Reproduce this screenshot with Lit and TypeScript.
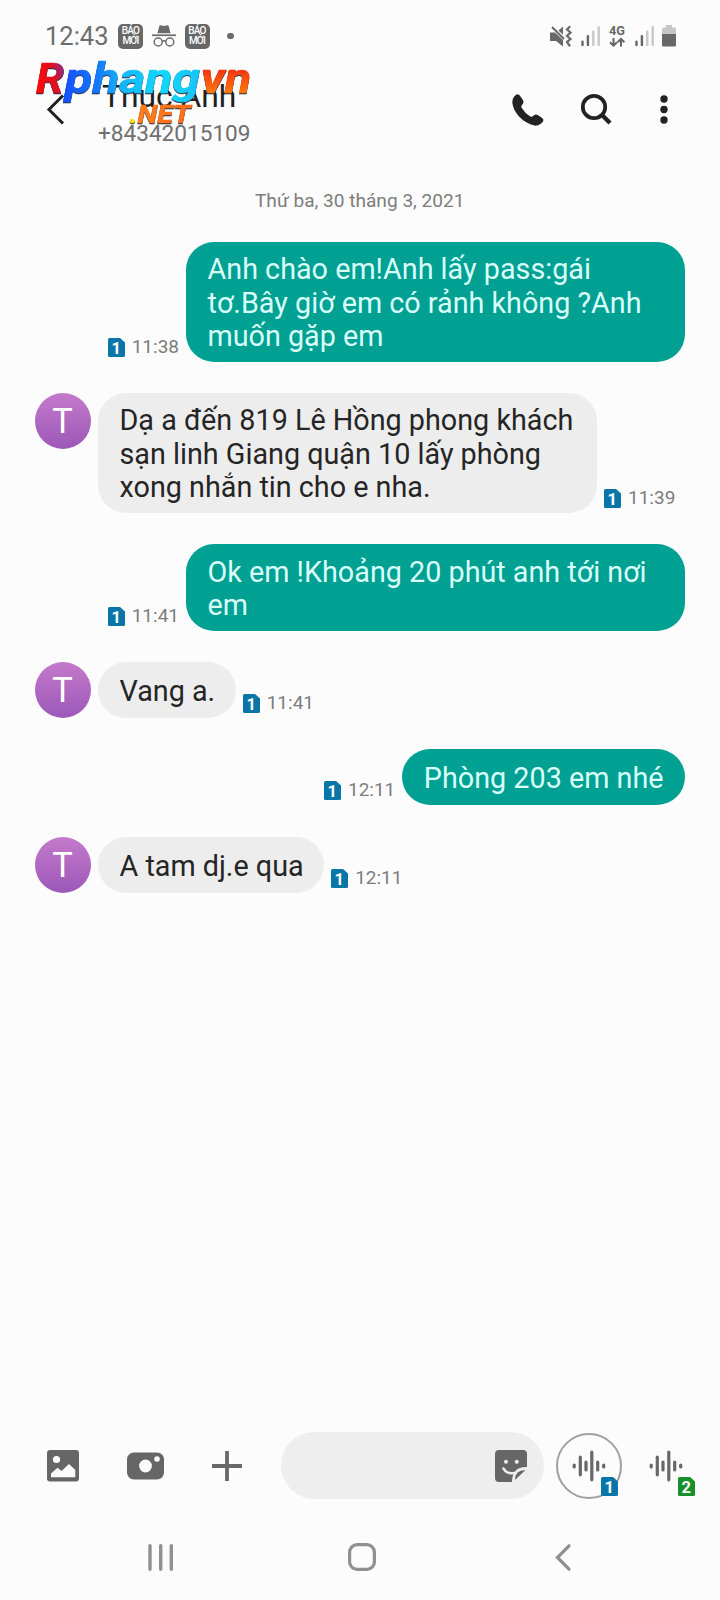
import { LitElement, html, css, svg } from "lit";
import { customElement, property } from "lit/decorators.js";

interface Message {
  mine: boolean;
  time: string;
  lines: string[];
  wide?: boolean;
}

const MESSAGES: Message[] = [
  { mine: true, time: "11:38", wide: true, lines: ["Anh chào em!Anh lấy pass:gái", "tơ.Bây giờ em có rảnh không ?Anh", "muốn gặp em"] },
  { mine: false, time: "11:39", wide: true, lines: ["Dạ a đến 819 Lê Hồng phong khách", "sạn linh Giang quận 10 lấy phòng", "xong nhắn tin cho e nha."] },
  { mine: true, time: "11:41", wide: true, lines: ["Ok em !Khoảng 20 phút anh tới nơi", "em"] },
  { mine: false, time: "11:41", lines: ["Vang a."] },
  { mine: true, time: "12:11", lines: ["Phòng 203 em nhé"] },
  { mine: false, time: "12:11", lines: ["A tam dj.e qua"] },
];

@customElement("sim-badge")
class SimBadge extends LitElement {
  @property() num = "1";
  static styles = css`
    :host { display: block; width: 17px; height: 19px; flex: none; }
    svg { display: block; }
    .blue { fill: #0a76a8; }
    .green { fill: #17902c; }
    text { font: 700 16.5px Roboto, sans-serif; fill: #fff; text-anchor: middle; }
  `;
  render() {
    return html`<svg width="17" height="19" viewBox="0 0 17 19">
      <path class=${this.num === "1" ? "blue" : "green"} d="M1.5 0H12L17 4.5V17.5Q17 19 15.5 19H1.5Q0 19 0 17.5V1.5Q0 0 1.5 0Z" />
      <text x="8.2" y="15.6">${this.num}</text>
    </svg>`;
  }
}

@customElement("message-row")
class MessageRow extends LitElement {
  @property({ attribute: false }) message!: Message;
  static styles = css`
    :host { display: block; }
    .row { display: flex; align-items: flex-end; }
    .mine { flex-direction: row-reverse; }
    .avatar {
      align-self: flex-start; width: 56px; height: 56px; margin-right: 7.5px; border-radius: 50%; flex: none;
      background: linear-gradient(#c47acb, #9c58b8);
      color: #fff; font-size: 34.5px; line-height: 56px; text-align: center;
    }
    .bubble {
      box-sizing: border-box; min-height: 56px; padding: 11.6px 20.5px 8.2px 21.5px; border-radius: 28px;
      display: flex; flex-direction: column; justify-content: center;
      background: #ededed; color: #252525; font-size: 28.75px; line-height: 33.4px; white-space: nowrap;
    }
    .mine .bubble { background: #00a092; color: #d9fffb; padding-right: 21.5px; }
    .wide { width: 499px; }
    .meta { display: flex; align-items: flex-end; gap: 7px; margin: 0 7px 5px; }
    .time { font-size: 19px; line-height: 20px; color: #7c7c7c; }
  `;
  render() {
    const m = this.message;
    return html`<div class="row ${m.mine ? "mine" : ""}">
      ${m.mine ? "" : html`<div class="avatar">T</div>`}
      <div class="bubble ${m.wide ? "wide" : ""}">${m.lines.map((l) => html`<div>${l}</div>`)}</div>
      <div class="meta"><sim-badge></sim-badge><span class="time">${m.time}</span></div>
    </div>`;
  }
}

const wave = svg`<path d="M4.2 17v2M10.3 9.2v17.6M16 14v8M21.8 4.2v27.6M27.7 14v8M33.7 17v2"
  fill="none" stroke="#686868" stroke-width="3.2" stroke-linecap="round" />`;

const signal = html`<svg class="signal" width="20" height="20" viewBox="0 0 20 20">
  <path d="M1.5 15.7v3.2M6.9 10.2v8.7" stroke="#666" stroke-width="2.4" stroke-linecap="round" />
  <path d="M12.3 5.6v13.3M17.7 1.2v17.7" stroke="#c8c8c8" stroke-width="2.4" stroke-linecap="round" />
</svg>`;

const news = html`<div class="news"><span>BÁO</span><span>MỚI</span></div>`;

@customElement("app-root")
class AppRoot extends LitElement {
  static styles = css`
    :host {
      display: flex; flex-direction: column; position: relative; width: 720px; height: 1600px;
      background: #fcfcfc; font-family: Roboto, "Noto Sans", sans-serif; overflow: hidden;
    }
    svg { display: block; flex: none; overflow: visible; }
    .status { display: flex; align-items: center; height: 72px; padding: 0 44px 0 45px; box-sizing: border-box; flex: none; color: #6d6d6d; }
    .clock { font-size: 25.5px; line-height: 30px; width: 73px; }
    .news {
      width: 25px; height: 25px; border-radius: 5px; background: #676767; color: #fff; flex: none;
      display: flex; flex-direction: column; align-items: center; justify-content: center;
      font-size: 10px; line-height: 10px; font-weight: 500; letter-spacing: -0.8px;
    }
    .incognito { margin: 0 9px 0 8.5px; }
    .dot { width: 6.6px; height: 6.6px; border-radius: 50%; background: #6b6b6b; margin-left: 17.5px; }
    .mute { margin-left: auto; }
    .signal { margin-left: 9px; }
    .net { margin: 0 0 0 8px; }
    .net text { font: 700 13.5px Roboto, sans-serif; fill: #666; }
    .battery { margin-left: 7.5px; }

    .header { display: flex; height: 90px; padding: 0 52px 0 47px; box-sizing: border-box; flex: none; }
    .back { margin-top: 21.5px; }
    .who { margin: 7px 0 0 34px; flex: 1; }
    .name { font-size: 31.8px; line-height: 35px; color: #202020; padding-left: 3px; }
    .phone { font-size: 22.6px; line-height: 28px; color: #6f6f6f; margin: 6px 0 0 -1px; }
    .call { margin-top: 21.5px; }
    .search { margin: 22px 0 0 36.5px; }
    .more { margin: 22px 0 0 49.5px; }
    .brand { position: absolute; left: 30px; top: 55px; filter: drop-shadow(.8px 1.3px 0 #243048); }
    .brand text { font: italic 700 42px Roboto, sans-serif; }
    .brand .net-text { font-size: 26px; }

    .thread { flex: 1; padding: 24.5px 35px 0 34.5px; display: flex; flex-direction: column; }
    .date { text-align: center; font-size: 19.1px; line-height: 27px; color: #7c7c7c; margin-bottom: 28px; }
    .list { display: flex; flex-direction: column; gap: 31.3px; }

    .composer { display: flex; align-items: center; height: 67px; padding-left: 47px; flex: none; }
    .camera { margin-left: 48px; }
    .plus { margin-left: 48px; }
    .field {
      width: 263px; height: 67px; box-sizing: border-box; margin-left: 39px; border-radius: 34px; background: #eee;
      display: flex; align-items: center; justify-content: flex-end; padding-right: 17px;
    }
    .voice { position: relative; width: 66px; height: 66px; box-sizing: border-box; border-radius: 50%; margin-left: 11px; display: flex; align-items: center; justify-content: center; flex: none; }
    .ringed { border: 2px solid #a0a0a0; margin-left: 11.5px; }
    .voice sim-badge { position: absolute; right: 4px; bottom: 3px; }
    .ringed sim-badge { right: 1.5px; bottom: 1px; }
    .nav { display: flex; align-items: center; height: 101px; box-sizing: border-box; padding: 15px 0 0 148px; flex: none; }
    .home { margin-left: 174px; }
    .prev { margin-left: 179px; }
  `;

  render() {
    return html`
      <div class="status">
        <div class="clock">12:43</div>
        ${news}
        <svg class="incognito" width="24" height="22" viewBox="0 0 24 22" fill="#6b6b6b">
          <path d="M5.4 8.2L7.2 1.4Q7.6 0 9 .3L12 1L15 .3Q16.4 0 16.8 1.4L18.6 8.2Z" />
          <rect x="0" y="9.4" width="24" height="1.7" />
          <g fill="none" stroke="#6b6b6b" stroke-width="1.5"><circle cx="6.2" cy="17" r="4" /><circle cx="17.8" cy="17" r="4" /><path d="M10.2 16.4Q12 15 13.8 16.4" /></g>
        </svg>
        ${news}
        <div class="dot"></div>
        <svg class="mute" width="22" height="21" viewBox="0 0 22 21">
          <path d="M0 6.5H5L13 14V20.5L6 15H0ZM8.5 4.5L13 .5V8.8Z" fill="#686868" />
          <path d="M2 1L14 13" stroke="#686868" stroke-width="2" />
          <path d="M19.5 1L17 3.5L20.5 6.5L17 10L20.5 13L17 16L19.5 19.5" fill="none" stroke="#686868" stroke-width="2.2" stroke-linecap="round" />
        </svg>
        ${signal}
        <svg class="net" width="17" height="22" viewBox="0 0 17 22">
          <text x="0" y="10" textLength="16" lengthAdjust="spacingAndGlyphs">4G</text>
          <path d="M4.5 13V20M1 17.2L4.5 20.6L8 17.2M12 21.5V14M8.6 17.2L12 13.8L15.4 17.2" fill="none" stroke="#666" stroke-width="2" />
        </svg>
        ${signal}
        <svg class="battery" width="14" height="22" viewBox="0 0 14 22">
          <path d="M4 0H10V2.5H12.5Q14 2.5 14 4V9H0V4Q0 2.5 1.5 2.5H4Z" fill="#c6c6c6" />
          <path d="M0 9H14V20Q14 21.5 12.5 21.5H1.5Q0 21.5 0 20Z" fill="#686868" />
        </svg>
      </div>

      <div class="header">
        <svg class="back" width="18" height="31" viewBox="0 0 18 31"><path d="M16 1.5L2 15.5L16 29.5" fill="none" stroke="#1f1f1f" stroke-width="3" /></svg>
        <div class="who">
          <div class="name">Thục Anh</div>
          <div class="phone">+84342015109</div>
        </div>
        <svg class="call" width="32" height="32" viewBox="0 0 32 32"><path fill="#222" d="M2.2 2.4Q4.5 0 6.3 .4Q7.3 .7 8.3 2.2L11 6.2Q12.3 8.3 10.8 10L9.6 11.6Q8.9 12.6 9.6 13.8Q12.8 19.2 18.2 22.5Q19.4 23.1 20.4 22.4L22 21.2Q23.8 19.8 25.8 21.1L29.8 23.8Q31.6 25 31.4 26.3Q31 28 29.2 29.6Q26.6 32 22.6 31.6Q13.6 29.5 7 22.5Q1 15.6 .3 8.5Q.1 4.6 2.2 2.4Z" /></svg>
        <svg class="search" width="30" height="31" viewBox="0 0 30 31"><circle cx="13" cy="13" r="11.2" fill="none" stroke="#222" stroke-width="3.8" /><path d="M20.8 20.8L29 29" stroke="#222" stroke-width="4.4" /></svg>
        <svg class="more" width="8" height="30" viewBox="0 0 8 30" fill="#222"><circle cx="4" cy="5" r="3.7" /><circle cx="4" cy="15.5" r="3.7" /><circle cx="4" cy="26" r="3.7" /></svg>
      </div>

      <svg class="brand" width="228" height="76" viewBox="30 55 228 76">
        <defs>
          <linearGradient id="first" gradientUnits="userSpaceOnUse" x1="36" y1="80" x2="66" y2="74">
            <stop offset="0" stop-color="#ff0808" /><stop offset=".6" stop-color="#e01020" /><stop offset="1" stop-color="#80308c" />
          </linearGradient>
          <linearGradient id="middle" gradientUnits="userSpaceOnUse" x1="63" y1="0" x2="200" y2="0">
            <stop offset="0" stop-color="#1450ff" /><stop offset=".25" stop-color="#1478ff" /><stop offset=".42" stop-color="#14b4fa" />
            <stop offset=".7" stop-color="#10d8ff" /><stop offset="1" stop-color="#18c4f8" />
          </linearGradient>
          <linearGradient id="last" gradientUnits="userSpaceOnUse" x1="0" y1="70" x2="0" y2="93">
            <stop offset="0" stop-color="#f83410" /><stop offset="1" stop-color="#ff7a08" />
          </linearGradient>
          <linearGradient id="sub" gradientUnits="userSpaceOnUse" x1="130" y1="0" x2="192" y2="0">
            <stop offset="0" stop-color="#ffe010" /><stop offset=".09" stop-color="#ffe010" /><stop offset=".11" stop-color="#ff7f1c" /><stop offset="1" stop-color="#ff6c18" />
          </linearGradient>
        </defs>
        <g stroke-width=".6">
          <text y="92.7" lengthAdjust="spacingAndGlyphs" x="36" textLength="28" fill="url(#first)" stroke="url(#first)">R</text>
          <text y="92.7" lengthAdjust="spacingAndGlyphs" x="65" textLength="135" fill="url(#middle)" stroke="url(#middle)">phang</text>
          <text y="92.7" lengthAdjust="spacingAndGlyphs" x="201" textLength="50" fill="url(#last)" stroke="url(#last)">vn</text>
          <text class="net-text" x="129.5" y="122.5" textLength="61" lengthAdjust="spacingAndGlyphs" fill="url(#sub)" stroke="url(#sub)">.NET</text>
        </g>
      </svg>

      <div class="thread">
        <div class="date">Thứ ba, 30 tháng 3, 2021</div>
        <div class="list">${MESSAGES.map((m) => html`<message-row .message=${m}></message-row>`)}</div>
      </div>

      <div class="composer">
        <svg width="32" height="32" viewBox="0 0 32 32">
          <rect width="32" height="31.5" rx="3" fill="#666" /><circle cx="9.5" cy="9.5" r="3.6" fill="#fcfcfc" />
          <path d="M4 27.3V23.5L10.5 17.8L14.5 21L22 14L28.3 20V27.3Z" fill="#fcfcfc" />
        </svg>
        <svg class="camera" width="37" height="28" viewBox="0 0 37 28">
          <rect y=".5" width="37" height="27" rx="7" fill="#666" /><circle cx="18.5" cy="14" r="6.4" fill="#fcfcfc" /><circle cx="30" cy="7" r="2.8" fill="#fcfcfc" />
        </svg>
        <svg class="plus" width="30" height="30" viewBox="0 0 30 30"><path d="M15 0V30M0 15H30" stroke="#686868" stroke-width="3.8" /></svg>
        <div class="field">
          <svg width="32" height="32" viewBox="0 0 32 32">
            <path d="M4 0H28Q32 0 32 4V17Q17 16.5 17 32H4Q0 32 0 28V4Q0 0 4 0Z" fill="#666" />
            <path d="M20 30Q20 20 30.5 20Z" fill="#666" />
            <circle cx="11" cy="11.8" r="2" fill="#eee" /><circle cx="21.8" cy="11.8" r="2" fill="#eee" />
            <path d="M8.5 18.5Q11.5 24.3 19 23" fill="none" stroke="#eee" stroke-width="2.6" stroke-linecap="round" />
          </svg>
        </div>
        <div class="voice ringed">
          <svg width="38" height="36" viewBox="0 0 38 36">${wave}</svg>
          <sim-badge num="1"></sim-badge>
        </div>
        <div class="voice">
          <svg width="38" height="36" viewBox="0 0 38 36">${wave}</svg>
          <sim-badge num="2"></sim-badge>
        </div>
      </div>

      <div class="nav">
        <svg width="26" height="27" viewBox="0 0 26 27"><path d="M2 1.8V25.2M12.7 1.8V25.2M23.3 1.8V25.2" stroke="#909090" stroke-width="3.4" stroke-linecap="round" /></svg>
        <svg class="home" width="28" height="28" viewBox="0 0 28 28"><rect x="1.6" y="1.6" width="24.8" height="24.8" rx="7.5" fill="none" stroke="#909090" stroke-width="3.2" /></svg>
        <svg class="prev" width="16" height="27" viewBox="0 0 16 27"><path d="M14 1.8L2.4 13.5L14 25.2" fill="none" stroke="#909090" stroke-width="3.2" stroke-linecap="round" /></svg>
      </div>
    `;
  }
}
